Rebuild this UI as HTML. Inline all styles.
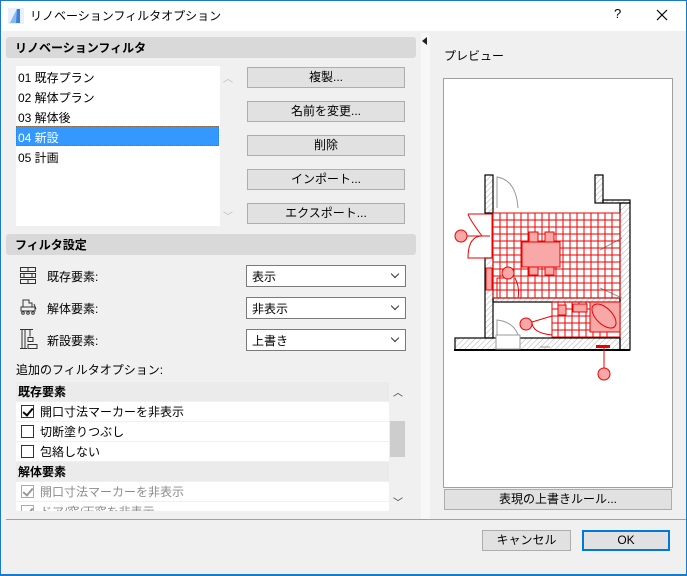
<!DOCTYPE html>
<html><head><meta charset="utf-8"><style>
*{box-sizing:border-box;margin:0;padding:0}
body{width:687px;height:576px;overflow:hidden;background:#f0f0f0;font-family:"Liberation Sans","Noto Sans CJK JP",sans-serif;font-size:12px;color:#000;position:relative}
.a{position:absolute}
.win{left:0;top:0;width:687px;height:576px;border:1px solid #1979ca;border-bottom-width:2px}
.title{left:1px;top:1px;width:685px;height:30px;background:#fff}
.hdr{background:#d9d9d9;border-radius:3px;font-weight:bold;padding:2px 0 0 9px;height:21px}
.btn{background:#e1e1e1;border:1px solid #adadad;text-align:center;line-height:19px;height:21px}
.dd{background:#fff;border:1px solid #7a7a7a;height:22px;padding:2px 0 0 5px}
.dd:after{content:"";position:absolute;right:7px;top:5px;width:5px;height:5px;border-right:1px solid #333;border-bottom:1px solid #333;transform:rotate(45deg)}
.row{position:absolute;left:0;width:373px;height:19px;background:#fff;padding:1px 0 0 5px}
.sh{background:#ebebeb;font-weight:bold;padding-left:2px}
.cb{display:inline-block;width:13px;height:13px;border:1px solid #333;vertical-align:-2px;margin-right:6px;position:relative;background:#fff}
.ck:after{content:"";position:absolute;left:3px;top:0px;width:4px;height:8px;border-right:2px solid #000;border-bottom:2px solid #000;transform:rotate(40deg)}
.dis{color:#8c8c8c}.dis .cb{border-color:#aaa}.dis .ck:after{border-color:#999}
</style></head><body>
<div class="a win"></div>
<div class="a title"></div>
<svg class="a" style="left:8px;top:8px" width="16" height="16"><rect width="16" height="16" fill="#e8f0fb"/><path d="M2 15 L9 1 L12 1 L12 15 Z" fill="#3a7fd8"/><path d="M2 15 L9 1 L8 15Z" fill="#8bb8ef"/></svg>
<div class="a" style="left:30px;top:7px">リノベーションフィルタオプション</div>
<div class="a" style="left:614px;top:6px;font-size:13px">?</div>
<svg class="a" style="left:656px;top:9px" width="12" height="12"><path d="M1 1L11 11M11 1L1 11" stroke="#000" stroke-width="1.2"/></svg>

<div class="a hdr" style="left:6px;top:37px;width:410px">リノベーションフィルタ</div>
<div class="a" style="left:16px;top:66px;width:204px;height:160px;background:#fff"></div>
<div class="a" style="left:16px;top:126px;width:203px;height:20px;background:#3399ff;border:1px dotted #8a6a4a"></div>
<div class="a" style="left:18px;top:68px;line-height:20px">01 既存プラン<br>02 解体プラン<br>03 解体後<br><span style="color:#fff">04 新設</span><br>05 計画</div>
<div class="a" style="left:223px;top:70px;color:#bbb;font-size:10px">︿</div>
<div class="a" style="left:223px;top:208px;color:#bbb;font-size:10px">﹀</div>
<div class="a btn" style="left:247px;top:67px;width:158px">複製...</div>
<div class="a btn" style="left:247px;top:101px;width:158px">名前を変更...</div>
<div class="a btn" style="left:247px;top:135px;width:158px">削除</div>
<div class="a btn" style="left:247px;top:169px;width:158px">インポート...</div>
<div class="a btn" style="left:247px;top:203px;width:158px">エクスポート...</div>

<div class="a hdr" style="left:6px;top:234px;width:410px">フィルタ設定</div>
<svg class="a" style="left:19px;top:266px" width="18" height="18" fill="none" stroke="#333"><rect x="1.5" y="1.5" width="15" height="4"/><rect x="1.5" y="7.5" width="15" height="4"/><rect x="1.5" y="13.5" width="15" height="4"/><path d="M9 1.5v4M5 7.5v4M13 7.5v4M9 13.5v4"/></svg>
<div class="a" style="left:47px;top:268px">既存要素:</div>
<svg class="a" style="left:19px;top:296px" width="19" height="20" fill="none" stroke="#333"><path d="M4 11V4h6v3h3v4M2 11h14v4H2z M15 8l2 5"/><circle cx="4" cy="17" r="1.3"/><circle cx="9" cy="17" r="1.3"/><circle cx="14" cy="17" r="1.3"/></svg>
<div class="a" style="left:47px;top:300px">解体要素:</div>
<svg class="a" style="left:19px;top:328px" width="19" height="22" fill="none" stroke="#333"><path d="M1 1.5h13M3 1.5v19M6 1.5v19M1 20.5h7M11 1.5v7M9 9.5h5v4H9zM9 16.5h9v4H9z"/></svg>
<div class="a" style="left:47px;top:332px">新設要素:</div>
<div class="a dd" style="left:246px;top:265px;width:160px">表示</div>
<div class="a dd" style="left:246px;top:297px;width:160px">非表示</div>
<div class="a dd" style="left:246px;top:329px;width:160px">上書き</div>
<div class="a" style="left:16px;top:361px">追加のフィルタオプション:</div>

<div class="a" style="left:16px;top:382px;width:390px;height:129px;overflow:hidden;background:#f0f0f0">
<div class="row sh" style="top:0">既存要素</div>
<div class="row" style="top:20px"><span class="cb ck"></span>開口寸法マーカーを非表示</div>
<div class="row" style="top:40px"><span class="cb"></span>切断塗りつぶし</div>
<div class="row" style="top:60px"><span class="cb"></span>包絡しない</div>
<div class="row sh" style="top:80px">解体要素</div>
<div class="row dis" style="top:100px"><span class="cb ck"></span>開口寸法マーカーを非表示</div>
<div class="row dis" style="top:120px"><span class="cb ck"></span>ドア/窓/天窓を非表示</div>
<div class="a" style="left:374px;top:39px;width:15px;height:36px;background:#cdcdcd"></div>
<div class="a" style="left:377px;top:2px;font-size:10px;color:#333">︿</div>
<div class="a" style="left:377px;top:112px;font-size:10px;color:#333">﹀</div>
</div>
<div class="a" style="left:6px;top:519px;width:680px;height:1px;background:#a0a0a0"></div>

<div class="a" style="left:421px;top:33px;width:9px;height:486px;background:#f7f7f7"></div>
<svg class="a" style="left:422px;top:37px" width="6" height="8"><path d="M5 0V8L0 4Z" fill="#222"/></svg>
<div class="a" style="left:444px;top:47px">プレビュー</div>
<div class="a" style="left:443px;top:78px;width:230px;height:410px;background:#fff;border:1px solid #a0a0a0"></div>
<svg class="a" style="left:440px;top:170px" width="200" height="215" viewBox="0 0 200 215">
<defs><pattern id="h" width="4" height="4" patternUnits="userSpaceOnUse" patternTransform="rotate(45)"><path d="M0 0V4" stroke="#999" stroke-width="0.8"/></pattern></defs>
<g fill="url(#h)" stroke="#000" stroke-width="1.2">
<rect x="45" y="5" width="8" height="38"/>
<rect x="45" y="88" width="8" height="80"/>
<rect x="155" y="5" width="8" height="28"/>
<rect x="163" y="30" width="27" height="3"/>
<rect x="180" y="33" width="10" height="147"/>
<rect x="15" y="168" width="165" height="12"/>
<rect x="53" y="128" width="127" height="4"/>
</g>
<path d="M14 180H190" stroke="#000" stroke-width="2"/>
<g stroke="#999" fill="none"><path d="M57 38V7Q76 10 78 38M57 165V150Q75 152 79 168M100 177H110M160 80L182 68M160 118L182 128"/></g>
<rect x="56" y="165" width="24" height="14" fill="#fff" stroke="#999"/>
<g stroke="#e00" fill="none" stroke-width="1">
<path d="M53 50H180M53 57H180M53 64H180M53 71H180M53 78H180M53 85H180M53 92H180M53 99H180M53 106H180M53 113H180M53 120H180"/>
<path d="M60 43V128M67 43V128M74 43V128M81 43V128M88 43V128M95 43V128M102 43V128M109 43V128M116 43V128M123 43V128M130 43V128M137 43V128M144 43V128M151 43V128M158 43V128M165 43V128M172 43V128"/>
<rect x="53" y="43" width="127" height="85"/>
<path d="M112 139H178M112 146H178M112 153H178M112 160H178M118 132V167M125 132V167M132 132V167M139 132V167M146 132V167M153 132V167M160 132V167M167 132V167"/>
<rect x="112" y="132" width="68" height="35"/>
<path d="M28 44H52V88H28Q28 66 42 66M42 66Q30 50 28 44M20 66H50M57 108H68M57 108V128M75 108Q80 118 78 128"/>
<path d="M112 165Q92 163 92 152L112 146"/>
</g>
<rect x="82" y="72" width="38" height="25" fill="#f9a8a8" stroke="#e00"/>
<rect x="89" y="62" width="9" height="10" fill="#f9a8a8" stroke="#e00"/>
<rect x="105" y="62" width="9" height="10" fill="#f9a8a8" stroke="#e00"/>
<rect x="89" y="97" width="9" height="8" fill="#f9a8a8" stroke="#e00"/>
<rect x="105" y="97" width="9" height="8" fill="#f9a8a8" stroke="#e00"/>
<rect x="150" y="132" width="30" height="30" fill="#f9a8a8" stroke="#e00"/>
<ellipse cx="164" cy="146" rx="15" ry="8" transform="rotate(45 164 146)" fill="#f9a8a8" stroke="#e00"/>
<rect x="118" y="135" width="8" height="10" fill="#f9a8a8" stroke="#e00"/>
<rect x="133" y="134" width="14" height="8" fill="#f9a8a8" stroke="#e00"/>
<rect x="46" y="98" width="6" height="22" fill="#f9a8a8" stroke="#e00"/>
<path d="M164 175V200" stroke="#e00"/>
<rect x="156" y="175" width="14" height="3" fill="#e00"/>
<g fill="#f9a8a8" stroke="#e00"><circle cx="21" cy="66" r="6"/><circle cx="68" cy="103" r="6"/><circle cx="86" cy="154" r="6"/><circle cx="164" cy="204" r="6"/></g>
</svg>
<div class="a btn" style="left:444px;top:489px;width:228px">表現の上書きルール...</div>
<div class="a btn" style="left:482px;top:530px;width:89px">キャンセル</div>
<div class="a btn" style="left:582px;top:530px;width:88px;border:2px solid #0078d7;line-height:17px">OK</div>
</body></html>
